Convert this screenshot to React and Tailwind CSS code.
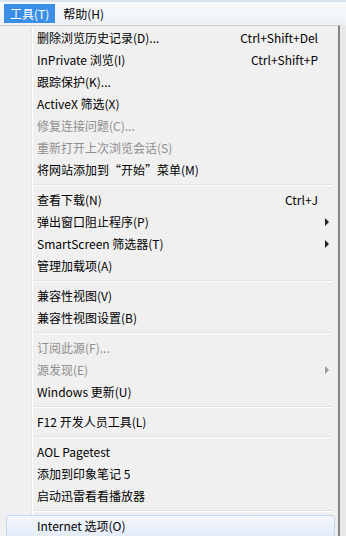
const groups = [
  [
    { label: '删除浏览历史记录(D)...', shortcut: 'Ctrl+Shift+Del' },
    { label: 'InPrivate 浏览(I)', shortcut: 'Ctrl+Shift+P' },
    { label: '跟踪保护(K)...' },
    { label: 'ActiveX 筛选(X)' },
    { label: '修复连接问题(C)...', disabled: true },
    { label: '重新打开上次浏览会话(S)', disabled: true },
    { label: '将网站添加到“开始”菜单(M)' },
  ],
  [
    { label: '查看下载(N)', shortcut: 'Ctrl+J' },
    { label: '弹出窗口阻止程序(P)', sub: true },
    { label: 'SmartScreen 筛选器(T)', sub: true },
    { label: '管理加载项(A)' },
  ],
  [
    { label: '兼容性视图(V)' },
    { label: '兼容性视图设置(B)' },
  ],
  [
    { label: '订阅此源(F)...', disabled: true },
    { label: '源发现(E)', disabled: true, sub: true },
    { label: 'Windows 更新(U)' },
  ],
  [{ label: 'F12 开发人员工具(L)' }],
  [
    { label: 'AOL Pagetest' },
    { label: '添加到印象笔记 5' },
    { label: '启动迅雷看看播放器' },
  ],
  [{ label: 'Internet 选项(O)', active: true }],
]

const Arrow = ({ disabled }) => (
  <span
    className={`block w-0 h-0 border-y-[4px] border-y-transparent border-l-[4px] ${
      disabled ? 'border-l-[#9a9a9a]' : 'border-l-[#222]'
    }`}
  />
)

const Item = ({ item }) => {
  if (item.active) {
    return (
      <div className="h-[22px] flex">
        <div className="flex-1 ml-[6px] mr-[3px] flex items-center pl-[30px] rounded-[3px] border border-[#c3d6ee] bg-gradient-to-b from-[#f4f7fc] to-[#e4ecf8]">
          <span className="text-black">{item.label}</span>
        </div>
      </div>
    )
  }
  return (
    <div className="h-[22px] flex">
      <div className="w-[32px] shrink-0 border-r border-[#e2e3e3]" />
      <div className="flex-1 flex items-center border-l border-white pl-[4px]">
        <span className={`flex-1 ${item.disabled ? 'text-[#8e8e8e]' : 'text-black'}`}>{item.label}</span>
        {item.shortcut && <span className="text-black">{item.shortcut}</span>}
        <span className="w-[20px] shrink-0 flex items-center pl-[7px]">
          {item.sub && <Arrow disabled={item.disabled} />}
        </span>
      </div>
    </div>
  )
}

const Separator = () => (
  <div className="h-[8px] flex">
    <div className="w-[32px] shrink-0 border-r border-[#e2e3e3]" />
    <div className="flex-1 flex flex-col justify-center border-l border-white pl-[1px] pr-[6px]">
      <div className="h-px bg-[#e0e0e0]" />
      <div className="h-px bg-white" />
    </div>
  </div>
)

export default function App() {
  return (
    <div
      className="w-[346px] h-[536px] overflow-hidden bg-[#f0f0f0] text-[12px] leading-none"
      style={{ fontFamily: '"Noto Sans CJK SC", "Microsoft YaHei", sans-serif' }}
    >
      {/* menu bar */}
      <div className="h-[25px] border-t-[2px] border-[#d9e4f1] bg-gradient-to-b from-[#f7f9fc] to-[#eef2f7] flex items-start pt-[2px] pl-[4px]">
        <div className="h-[19px] px-[6px] flex items-center bg-[#3a8ee6] text-white">工具(T)</div>
        <div className="h-[19px] px-[8px] flex items-center text-black">帮助(H)</div>
      </div>

      <div className="flex">
        {/* dropdown */}
        <div className="w-[340px] h-[520px] border-t border-r-2 border-t-[#cfcfcf] border-r-[#858585] bg-[#f0f0f0] pt-px">
          {groups.map((group, gi) => (
            <div key={gi}>
              {gi > 0 && <Separator />}
              {group.map((item) => (
                <Item key={item.label} item={item} />
              ))}
            </div>
          ))}
        </div>
        <div className="flex-1 bg-[#e9e9e9]" />
      </div>
    </div>
  )
}
